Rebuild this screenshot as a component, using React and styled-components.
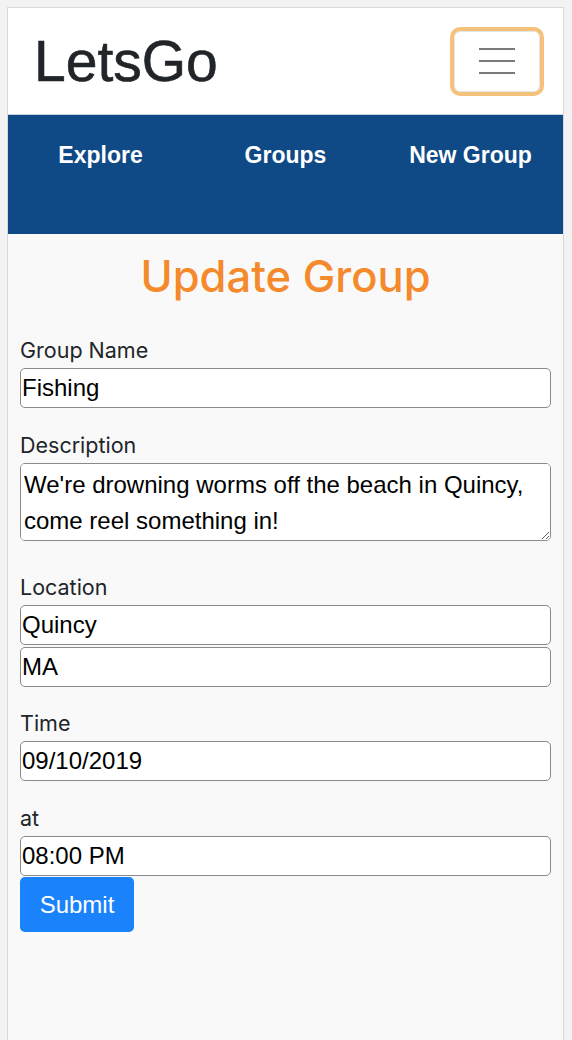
import React from 'react'
import styled, { createGlobalStyle } from 'styled-components';

const GlobalStyle = createGlobalStyle`
  body {
    margin: 0;
    background: #f2f2f2;
    font-family: "Liberation Sans", Arial, sans-serif;
  }
`;

const Page = styled.div`
  margin: 7px 8px 0 7px;
  border: 1px solid #d9d9d9;
  border-bottom: none;
  background: #f9f9f9;
  min-height: 1040px;
`;

const Header = styled.header`
  background: #fff;
  height: 106px;
  display: flex;
  align-items: center;
  justify-content: space-between;
  padding: 0 23px 0 26px;
  border-bottom: 1px solid #c9d3de;
`;

const Brand = styled.div`
  font-size: 57px;
  color: #212529;
  -webkit-text-stroke: 0.6px #212529;
`;

const MenuButton = styled.button`
  width: 86px;
  height: 61px;
  background: #fff;
  border: 1px solid #e6e6e6;
  border-radius: 6px;
  box-shadow: 0 0 0 4px #f5c27c;
  display: flex;
  flex-direction: column;
  align-items: center;
  justify-content: center;
  gap: 10px;
  padding: 0;
`;

const Line = styled.span`
  width: 36px;
  height: 2px;
  background: #7a7a7a;
`;

const Nav = styled.nav`
  background: #0f4a87;
  height: 119px;
  display: grid;
  grid-template-columns: repeat(3, 1fr);
  align-items: start;
  padding-top: 27px;
  box-sizing: border-box;
`;

const NavLink = styled.a`
  color: #fff;
  font-weight: bold;
  font-size: 23px;
  line-height: 26px;
  text-align: center;
  text-decoration: none;
`;

const Main = styled.main`
  padding: 17px 12px 0 12px;
`;

const Title = styled.h1`
  margin: 0 0 36px;
  text-align: center;
  color: #f48a2b;
  font-family: Inter, "Liberation Sans", sans-serif;
  font-size: 43.5px;
  line-height: 50px;
  font-weight: 500;
`;

const Field = styled.div`
  display: flex;
  flex-direction: column;
  margin-bottom: ${({ gap }) => gap ?? 24}px;
`;

const Label = styled.label`
  font-family: Inter, "Liberation Sans", sans-serif;
  font-size: 21.5px;
  color: #212529;
  margin-bottom: 5px;
  line-height: 26px;
`;

const Stack = styled.div`
  display: flex;
  flex-direction: column;
  gap: 2px;
`;

const Input = styled.input`
  height: 40px;
  box-sizing: border-box;
  border: 1px solid #8a8a8a;
  border-radius: 5px;
  background: #fff;
  font-family: "Liberation Sans", Arial, sans-serif;
  font-size: 24px;
  color: #000;
  padding: 0 1px;
`;

const TextArea = styled.textarea`
  height: 78px;
  box-sizing: border-box;
  border: 1px solid #8a8a8a;
  border-radius: 5px;
  background: #fff;
  font-family: "Liberation Sans", Arial, sans-serif;
  font-size: 24px;
  line-height: 36px;
  color: #000;
  padding: 3px 3px;
  resize: vertical;
`;

const Submit = styled.button`
  display: block;
  background: #1a82fb;
  color: #fff;
  border: none;
  border-radius: 5px;
  font-family: "Liberation Sans", Arial, sans-serif;
  font-size: 24px;
  width: 114px;
  height: 55px;
`;

const App = () => {
  return (
    <>
      <GlobalStyle />
      <Page>
        <Header>
          <Brand>LetsGo</Brand>
          <MenuButton>
            <Line />
            <Line />
            <Line />
          </MenuButton>
        </Header>
        <Nav>
          <NavLink>Explore</NavLink>
          <NavLink>Groups</NavLink>
          <NavLink>New Group</NavLink>
        </Nav>
        <Main>
          <Title>Update Group</Title>
          <Field>
            <Label>Group Name</Label>
            <Input defaultValue="Fishing" />
          </Field>
          <Field gap={33}>
            <Label>Description</Label>
            <TextArea defaultValue="We're drowning worms off the beach in Quincy, come reel something in!" />
          </Field>
          <Field gap={23}>
            <Label>Location</Label>
            <Stack>
              <Input defaultValue="Quincy" />
              <Input defaultValue="MA" />
            </Stack>
          </Field>
          <Field>
            <Label>Time</Label>
            <Input defaultValue="09/10/2019" />
          </Field>
          <Field gap={1}>
            <Label>at</Label>
            <Input defaultValue="08:00 PM" />
          </Field>
          <Submit>Submit</Submit>
        </Main>
      </Page>
    </>
  )
}

export default App;
